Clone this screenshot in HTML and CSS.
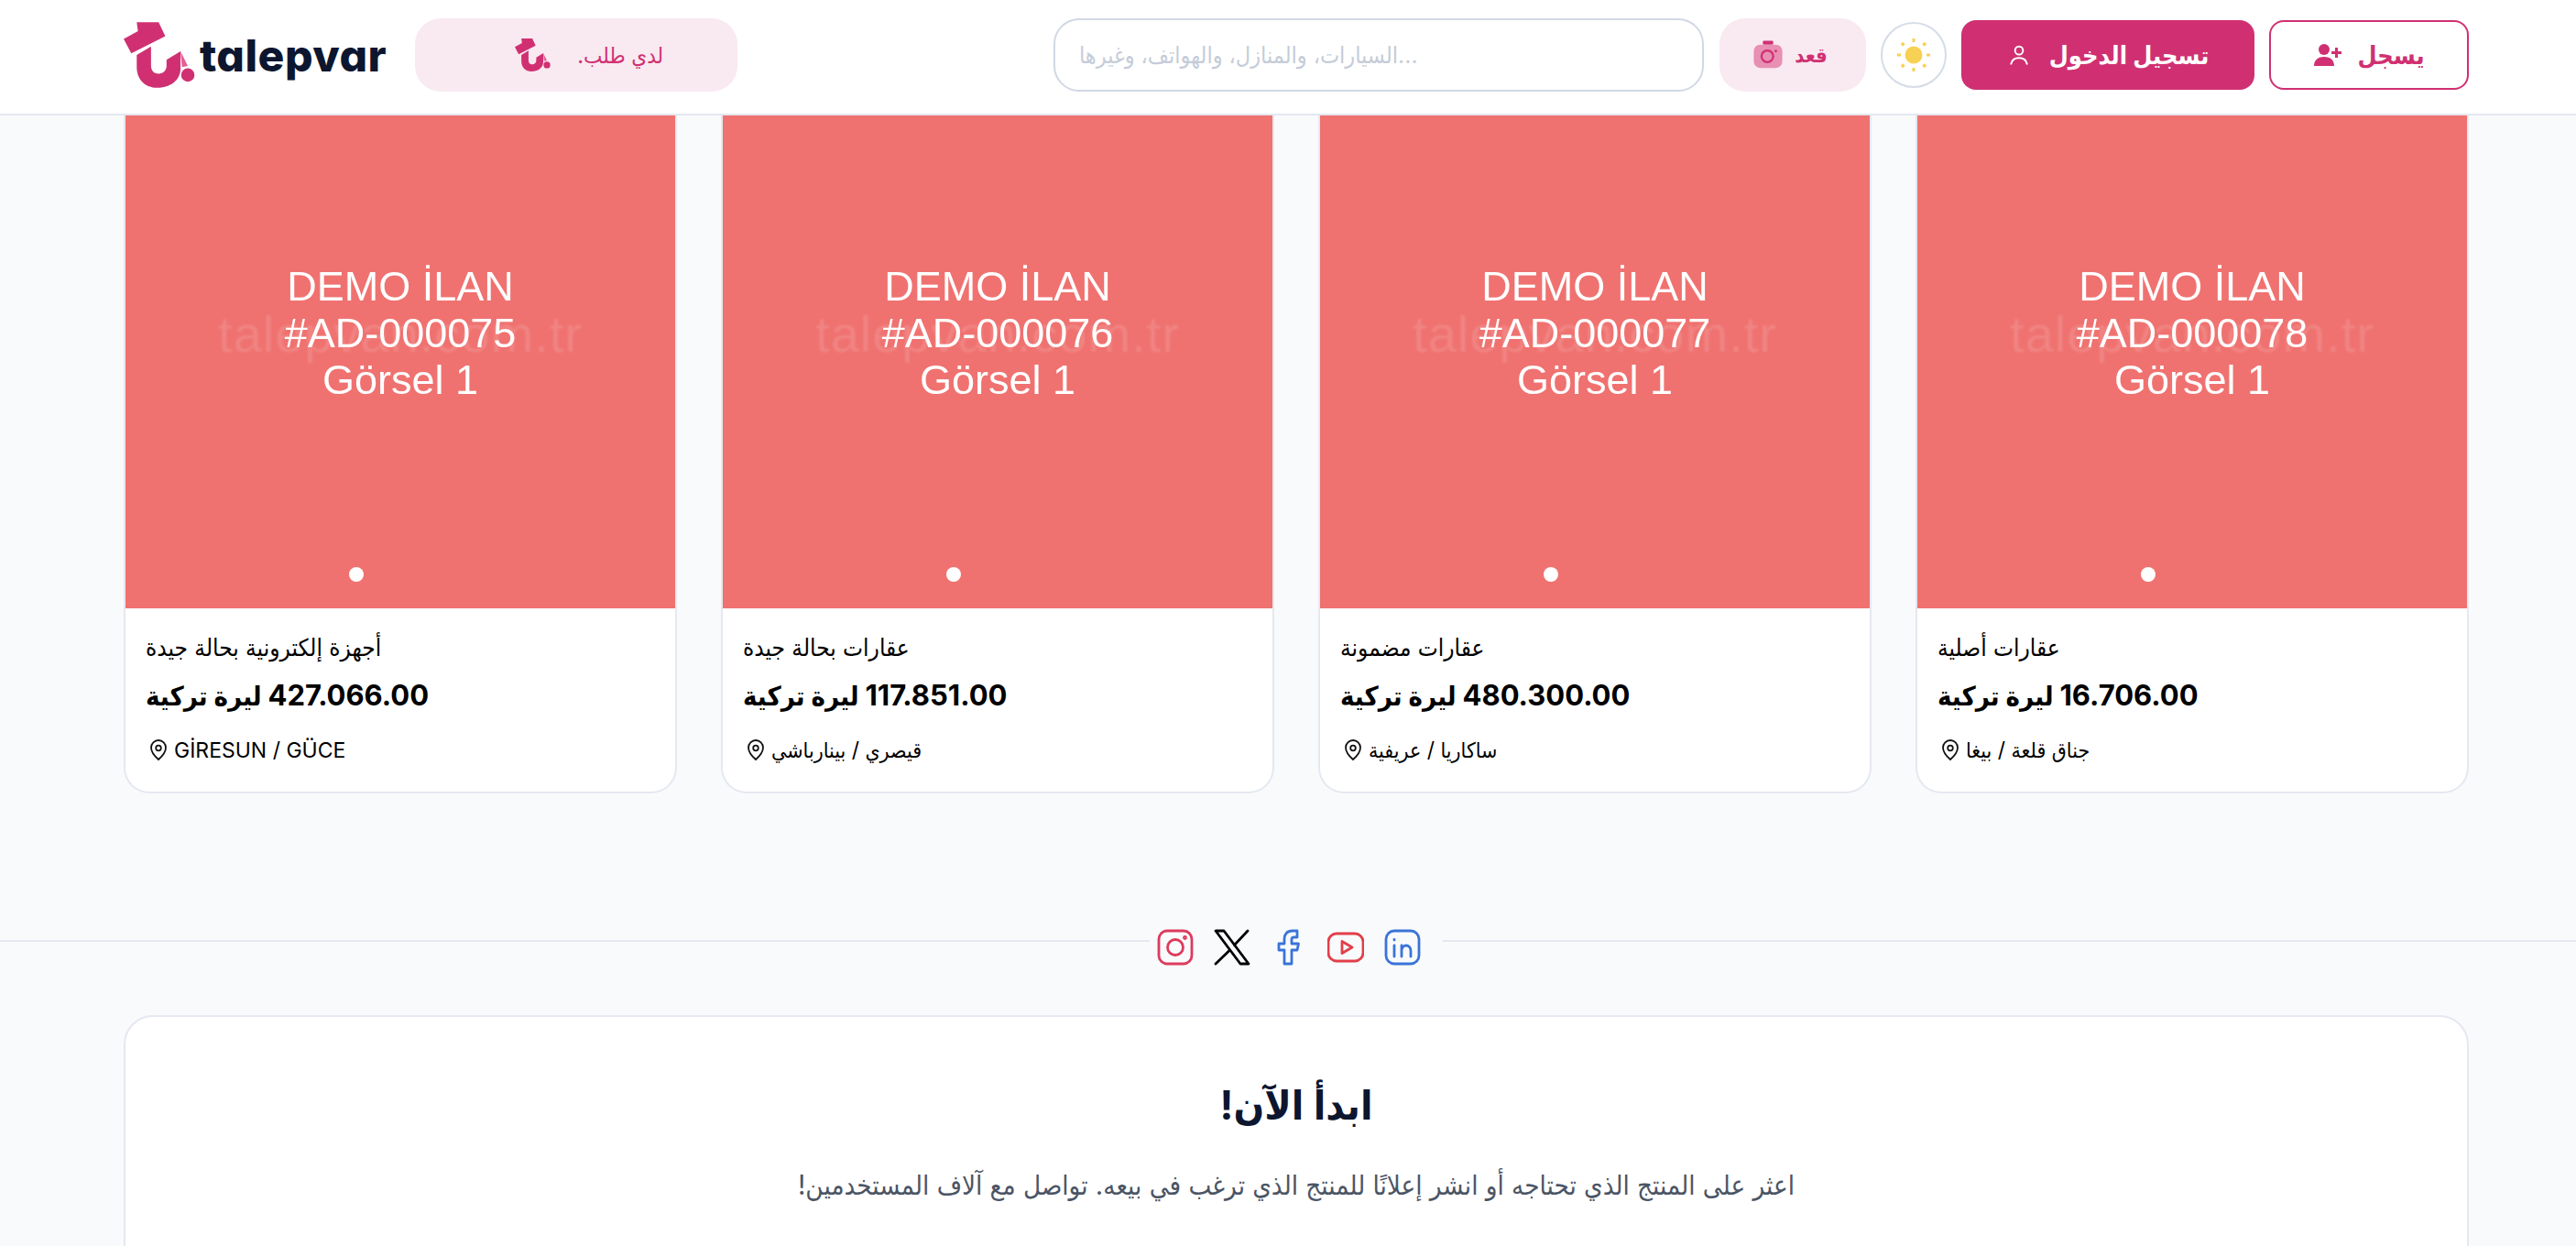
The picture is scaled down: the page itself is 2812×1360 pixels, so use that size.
FILE: index.html
```html
<!DOCTYPE html>
<html lang="ar">
<head>
<meta charset="utf-8">
<title>talepvar</title>
<link rel="stylesheet" href="styles.css">
</head>
<body>
<svg class="defs" width="0" height="0" aria-hidden="true">
  <symbol id="mark" viewBox="45 42 235 216">
    <path d="M88 42H160L182 88L70 145L45 97L92 72Z" fill="#d03072"/>
    <path d="M88 150L135 122V185C135 205 148 212 160 212C175 212 186 202 186 185V166L232 138V195C232 235 195 258 155 258C115 258 88 230 88 190Z" fill="#d03072"/>
    <path d="M232 138L256 186L237 190Z" fill="#e45f94"/>
    <circle cx="256" cy="216" r="22" fill="#d03072"/>
  </symbol>
</svg>
<header class="topbar">
  <div class="brand-group">
    <a class="brand">
      <svg class="brand-mark"><use href="#mark"/></svg>
      <span class="brand-name">talepvar</span>
    </a>
    <button class="soft-btn request-btn">
      <svg class="request-mark"><use href="#mark"/></svg>
      <span dir="rtl">لدي طلب.</span>
    </button>
  </div>
  <div class="actions">
    <div class="search">السيارات، والمنازل، والهواتف، وغيرها...</div>
    <button class="soft-btn sit-btn">
      <svg class="camera" viewBox="0 0 24 24"><rect x="8" y="1" width="8" height="3" rx="1" fill="#d03072"/><rect x="1" y="4" width="22" height="18" rx="5" fill="#e88fb4"/><circle cx="11.500" cy="13" r="4.500" fill="none" stroke="#d03072" stroke-width="1.600"/><circle cx="18" cy="9" r="1" fill="#d03072"/></svg>
      <span>قعد</span>
    </button>
    <button class="theme-btn" aria-label="theme">
      <svg viewBox="0 0 40 40" width="40" height="40"><circle cx="20" cy="20" r="9.500" fill="#f7d154"/><g fill="#f7d154"><rect x="18.500" y="2" width="3" height="4"/><rect x="18.500" y="34" width="3" height="4"/><rect x="2" y="18.500" width="4" height="3"/><rect x="34" y="18.500" width="4" height="3"/><rect x="6.500" y="6.500" width="3.500" height="3.500" transform="rotate(45 8.200 8.200)"/><rect x="30" y="6.500" width="3.500" height="3.500" transform="rotate(45 31.700 8.200)"/><rect x="6.500" y="30" width="3.500" height="3.500" transform="rotate(45 8.200 31.700)"/><rect x="30" y="30" width="3.500" height="3.500" transform="rotate(45 31.700 31.700)"/></g></svg>
    </button>
    <button class="login-btn">
      <svg viewBox="0 0 24 24" width="26" height="26" fill="none" stroke="#fff" stroke-width="1.800" stroke-linecap="round"><circle cx="12" cy="7.500" r="4"/><path d="M4 21c.8-4 4-6 8-6s7.200 2 8 6"/></svg>
      <span>تسجيل الدخول</span>
    </button>
    <button class="register-btn">
      <svg viewBox="0 0 32 26" width="32" height="26" fill="#d03072"><circle cx="12" cy="7" r="6"/><path d="M1 25c0-7 5-10 11-10s11 3 11 10z"/><path d="M24 5h3v4h4v3h-4v4h-3v-4h-4V9h4z"/></svg>
      <span>يسجل</span>
    </button>
  </div>
</header>
<main class="page">
  <section class="cards">
    <article class="card">
      <div class="photo">
        <div class="mark-text">talepvan.com.tr</div>
        <div class="photo-text">DEMO İLAN<br>#AD-000075<br>Görsel 1</div>
        <span class="dot"></span>
      </div>
      <div class="info">
        <h3 class="title" dir="rtl">أجهزة إلكترونية بحالة جيدة</h3>
        <p class="price" dir="rtl"><span class="num">427.066.00</span> ليرة تركية</p>
        <p class="place"><svg class="pin" viewBox="0 0 24 24"><path d="M12 22s8-7 8-13a8 8 0 0 0-16 0c0 6 8 13 8 13z"/><circle cx="12" cy="9.500" r="2.800"/></svg><span>GİRESUN / GÜCE</span></p>
      </div>
    </article>
    <article class="card">
      <div class="photo">
        <div class="mark-text">talepvan.com.tr</div>
        <div class="photo-text">DEMO İLAN<br>#AD-000076<br>Görsel 1</div>
        <span class="dot"></span>
      </div>
      <div class="info">
        <h3 class="title" dir="rtl">عقارات بحالة جيدة</h3>
        <p class="price" dir="rtl"><span class="num">117.851.00</span> ليرة تركية</p>
        <p class="place"><svg class="pin" viewBox="0 0 24 24"><path d="M12 22s8-7 8-13a8 8 0 0 0-16 0c0 6 8 13 8 13z"/><circle cx="12" cy="9.500" r="2.800"/></svg><span>قيصري / بينارباشي</span></p>
      </div>
    </article>
    <article class="card">
      <div class="photo">
        <div class="mark-text">talepvan.com.tr</div>
        <div class="photo-text">DEMO İLAN<br>#AD-000077<br>Görsel 1</div>
        <span class="dot"></span>
      </div>
      <div class="info">
        <h3 class="title" dir="rtl">عقارات مضمونة</h3>
        <p class="price" dir="rtl"><span class="num">480.300.00</span> ليرة تركية</p>
        <p class="place"><svg class="pin" viewBox="0 0 24 24"><path d="M12 22s8-7 8-13a8 8 0 0 0-16 0c0 6 8 13 8 13z"/><circle cx="12" cy="9.500" r="2.800"/></svg><span>ساكاريا / عريفية</span></p>
      </div>
    </article>
    <article class="card">
      <div class="photo">
        <div class="mark-text">talepvan.com.tr</div>
        <div class="photo-text">DEMO İLAN<br>#AD-000078<br>Görsel 1</div>
        <span class="dot"></span>
      </div>
      <div class="info">
        <h3 class="title" dir="rtl">عقارات أصلية</h3>
        <p class="price" dir="rtl"><span class="num">16.706.00</span> ليرة تركية</p>
        <p class="place"><svg class="pin" viewBox="0 0 24 24"><path d="M12 22s8-7 8-13a8 8 0 0 0-16 0c0 6 8 13 8 13z"/><circle cx="12" cy="9.500" r="2.800"/></svg><span>جناق قلعة / بيغا</span></p>
      </div>
    </article>
  </section>
  <div class="divider">
    <div class="socials">
      <svg viewBox="0 0 40 40" class="soc ig"><rect x="2" y="2" width="36" height="36" rx="9"/><circle cx="20" cy="20" r="8.500"/><circle cx="30.500" cy="9.500" r="1"/></svg>
      <svg viewBox="0 0 40 40" class="soc xx"><path d="M2 2h9l27 36h-9z"/><path d="M37 2L22.500 17.500M17 23.500L2 38"/></svg>
      <svg viewBox="0 0 40 40" class="soc fb"><path d="M29 2h-5c-6 0-9 3.500-9 9v5H9v7h6v15h8V23h6l1.500-7H23v-5c0-1.500 1-2 2.500-2H29z"/></svg>
      <svg viewBox="0 0 40 40" class="soc yt"><rect x="1" y="5" width="38" height="30" rx="9"/><path d="M16 13.500L27 20l-11 6.500z"/></svg>
      <svg viewBox="0 0 40 40" class="soc li"><rect x="2" y="2" width="36" height="36" rx="9"/><path d="M11 18v12M11 11.500v.5M19 30V18M19 24c0-4 2.500-6 5-6s5 2 5 6v6"/></svg>
    </div>
  </div>
  <section class="cta">
    <h2 dir="rtl">ابدأ الآن!</h2>
    <p dir="rtl">اعثر على المنتج الذي تحتاجه أو انشر إعلانًا للمنتج الذي ترغب في بيعه. تواصل مع آلاف المستخدمين!</p>
  </section>
</main>
</body>
</html>
```
FILE: styles.css
```css
* { box-sizing: border-box; }
html, body { margin: 0; height: 100%; overflow: hidden; }
body { background: #f8fafc; font-family: Inter, "DejaVu Sans Condensed", sans-serif; color: #000; }
.defs { position: absolute; }
button { font: inherit; border: 0; cursor: pointer; padding: 0; }
.page { height: calc(100vh - 126px); overflow: hidden; }

.topbar { height: 126px; background: #fff; border-bottom: 2px solid #e5e8f0; padding: 0 117px 4px 135px; display: flex; justify-content: space-between; align-items: center; }
.brand-group { display: flex; align-items: center; gap: 31px; }
.brand { display: flex; align-items: center; }
.brand-mark { width: 78px; height: 72px; }
.brand-name { font-size: 48px; font-weight: 800; color: #0d162f; letter-spacing: .5px; line-height: 1; margin: 2px 0 0 5px; font-feature-settings: "cv11"; }
.soft-btn { background: #f9e9f1; color: #d03072; border-radius: 28px; height: 80px; display: flex; align-items: center; justify-content: center; font-size: 24px; }
.request-btn { width: 352px; gap: 29px; padding-left: 28px; }
.request-mark { width: 39px; height: 36px; }
.actions { display: flex; align-items: center; }
.search { width: 710px; height: 80px; border: 2px solid #d1d8e4; border-radius: 28px; background: #fff; color: #c5ccd8; font-size: 25px; display: flex; align-items: center; padding: 0 26px; }
.sit-btn { width: 160px; margin-left: 17px; gap: 12px; font-size: 22px; font-weight: 700; padding-right: 6px; }
.camera { width: 34px; height: 34px; }
.theme-btn { width: 72px; height: 72px; border-radius: 50%; background: #fff; border: 2px solid #d5dce8; display: flex; align-items: center; justify-content: center; margin-left: 16px; }
.login-btn { width: 320px; height: 76px; margin-left: 16px; background: #d03072; color: #fff; border-radius: 16px; display: flex; align-items: center; justify-content: center; gap: 20px; font-size: 27px; font-weight: 700; }
.register-btn { width: 218px; height: 76px; margin-left: 16px; background: #fff; color: #d03072; border: 2px solid #d03072; border-radius: 16px; display: flex; align-items: center; justify-content: center; gap: 16px; font-size: 27px; font-weight: 700; }

.cards { display: grid; grid-template-columns: repeat(4, 604px); gap: 48px; padding: 0 117px 0 135px; }
.card { background: #fff; border: 2px solid #e5e8f0; border-top: 0; border-radius: 0 0 28px 28px; height: 740px; overflow: hidden; }
.photo { height: 538px; background: #ef7270; display: flex; justify-content: center; position: relative; font-family: "Liberation Sans", sans-serif; }
.photo-text { color: #fff; font-size: 45px; line-height: 51px; text-align: center; padding-top: 161px; filter: blur(.7px); position: relative; }
.mark-text { position: absolute; top: 205px; left: 0; right: 0; text-align: center; color: rgba(255,255,255,.13); font-size: 56px; line-height: 68px; letter-spacing: 1px; filter: blur(1px); }
.dot { position: absolute; left: 244px; bottom: 29px; width: 16px; height: 16px; border-radius: 50%; background: #fff; }
.info { padding: 26px 22px 0; }
.title { margin: 0; font-size: 26px; font-weight: 400; line-height: 34px; text-align: left; }
.price { margin: 15px 0 0; font-size: 29px; font-weight: 700; line-height: 40px; text-align: left; }
.num { font-size: 31px; }
.place { margin: 22px 0 0; font-size: 23px; line-height: 34px; display: flex; align-items: center; gap: 3px; }
.pin { width: 24px; height: 24px; margin: 0 2px 0 2px; fill: none; stroke: #111; stroke-width: 1.800; }

.divider { margin-top: 160px; height: 2px; background: #e5e8f0; display: flex; justify-content: center; align-items: center; }
.socials { display: flex; align-items: center; gap: 22px; background: #f8fafc; padding: 0 24px 0 8px; margin: 14px 0 0 18px; }
.soc { width: 40px; height: 40px; fill: none; stroke-width: 2.800; stroke-linejoin: round; stroke-linecap: round; }
.ig { stroke: #dd3b5c; }
.xx { stroke: #000; }
.fb { stroke: #3a74d8; }
.yt { stroke: #e23e49; }
.li { stroke: #3a74d8; }

.cta { margin: 80px 117px 0 135px; height: 400px; background: #fff; border: 2px solid #e5e8f0; border-radius: 32px; text-align: center; padding-top: 60px; }
.cta h2 { margin: 0; font-size: 44px; font-weight: 700; color: #0d162f; line-height: 72px; }
.cta p { margin: 28px 0 0; font-size: 29.300px; color: #4b5565; line-height: 48px; }
```
